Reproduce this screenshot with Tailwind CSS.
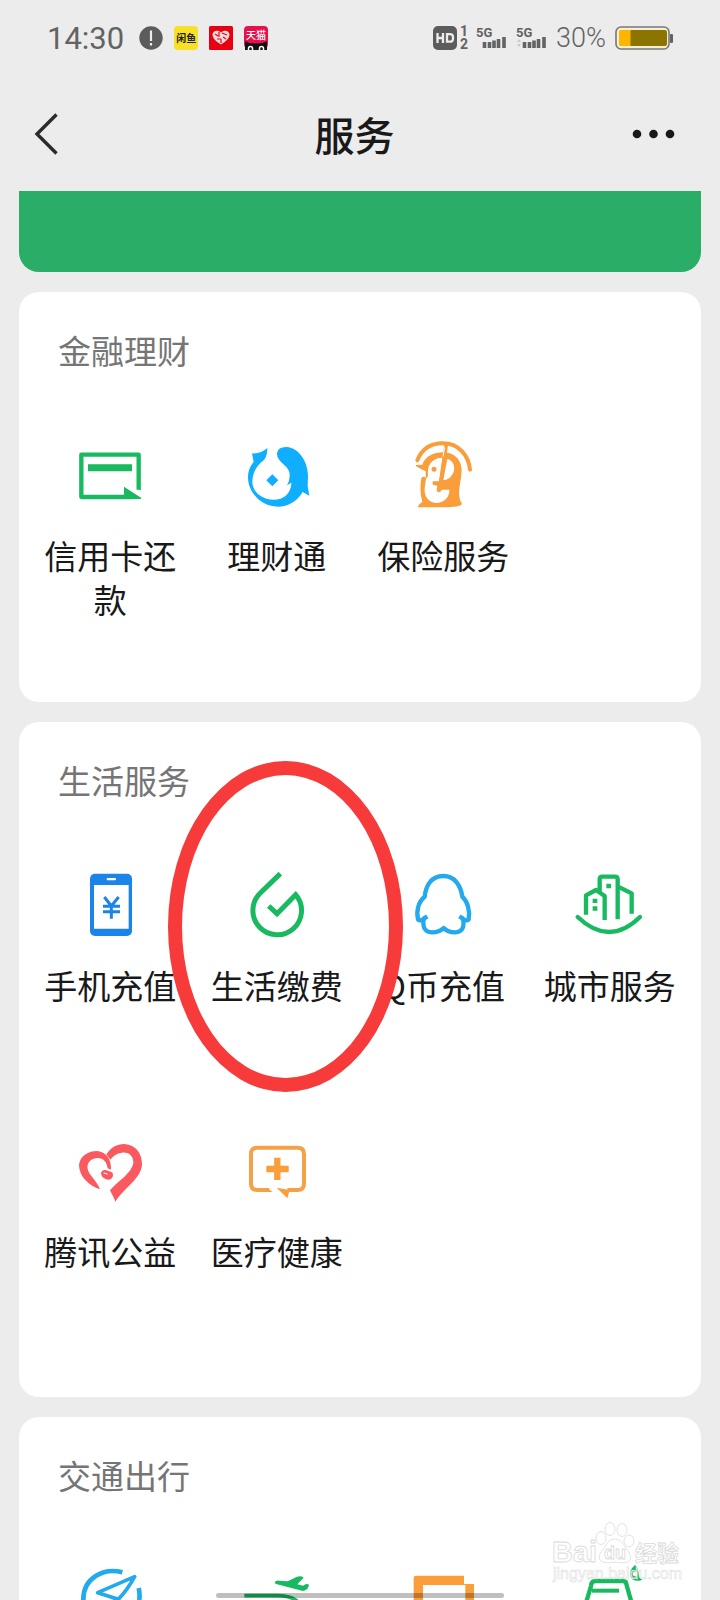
<!DOCTYPE html>
<html lang="zh-CN">
<head>
<meta charset="utf-8">
<meta name="viewport" content="width=device-width, initial-scale=1">
<title>服务</title>
<script src="https://cdn.jsdelivr.net/npm/@tailwindcss/browser@4"></script>
</head>
<body class="bg-[#ececec] text-[#191919] font-['Noto_Sans_CJK_SC',sans-serif]">
<div class="relative flex h-screen flex-col overflow-hidden">

  <!-- Status bar -->
  <div class="flex h-[76px] shrink-0 items-center justify-between pr-[46px] pl-[47px] font-[Roboto,sans-serif] text-[#636363]">
    <div class="flex items-center gap-[11px]">
      <span class="mr-1 text-[31px] leading-none">14:30</span>
      <svg class="size-6" viewBox="0 0 24 24"><circle cx="12" cy="12" r="11.7" fill="#5c5c5c"/><path d="M12 4.500v10.500M12 17v2.500" stroke="#ececec" stroke-width="2.200"/></svg>
      <div class="flex size-6 items-center justify-center rounded-sm bg-[#f8e026] font-['Noto_Sans_CJK_SC',sans-serif] text-[10px] leading-none font-bold text-[#222]">闲鱼</div>
      <svg class="size-6" viewBox="0 0 24 24"><rect width="24" height="24" rx="1.500" fill="#e60012"/><path d="M12 18.500C7 15.500 3.500 12 3.500 8.500C3.800 4.500 9 3.500 12 6.500C15 3.500 20.200 4.500 20.500 8.500C20.500 12 17 15.500 12 18.500Z" fill="#fbdcdc"/><path d="M6 8l3 2M10 6v5M13 7l5 2M8 13h4M14 11l3 2M12 13v4" stroke="#e60012" stroke-width="1.200"/></svg>
      <svg class="size-6" viewBox="0 0 24 24"><rect width="24" height="22" rx="4" fill="#e8104a"/><path d="M1 24V15Q4 17.500 12 17.500T23 15V24Z" fill="#111"/><text x="12" y="13" text-anchor="middle" font-family="Noto Sans CJK SC" font-size="10" font-weight="500" fill="#fff">天猫</text><path d="M4.500 24V22.500a2 2 0 0 1 4 0V24M15.500 24V22.500a2 2 0 0 1 4 0V24" fill="none" stroke="#fff" stroke-width="1.500"/></svg>
    </div>
    <div class="flex items-center">
      <svg class="h-6 w-6" viewBox="0 0 24 24"><rect width="24" height="24" rx="5" fill="#5c5c5c"/><path d="M4.500 7v10M10 7v10M4.500 12H10M14 8.200h3q3 0 3 3v1.500q0 3-3 3h-3z" fill="none" stroke="#ececec" stroke-width="2.300"/></svg>
      <div class="mr-2 flex w-[11px] flex-col items-end text-[14px] leading-[13px] font-bold"><span>1</span><span>2</span></div>
      <svg class="mr-2 h-6 w-8" viewBox="0 0 32 24"><text x="0" y="11" font-family="Roboto" font-size="13" font-weight="700" fill="#636363">5G</text><path d="M8.500 16v6M13.500 16v6M18 14.500V22M22.500 13v9M28 11v11" stroke="#636363" stroke-width="3.600"/></svg>
      <svg class="mr-2 h-6 w-8" viewBox="0 0 32 24"><text x="0" y="11" font-family="Roboto" font-size="13" font-weight="700" fill="#636363">5G</text><path d="M1 16l2-3 2 3zM1 18l2 3 2-3z" fill="#c9c9c9"/><path d="M8.500 16v6M13.500 16v6M18 14.500V22M22.500 13v9M28 11v11" stroke="#636363" stroke-width="3.600"/></svg>
      <span class="mr-[9px] text-[27px] leading-none font-light">30%</span>
      <svg class="h-6 w-[59px]" viewBox="0 0 59 24"><rect x="1" y="1" width="53" height="22" rx="5" fill="#f6efd8" stroke="#777" stroke-width="1.600"/><rect x="4" y="4" width="12" height="16" rx="1.500" fill="#ffb400"/><path d="M15.500 4H50a2 2 0 0 1 2 2V18a2 2 0 0 1-2 2H15.500Z" fill="#8c7400"/><rect x="55" y="8" width="3" height="9" rx="1" fill="#636363"/></svg>
    </div>
  </div>

  <!-- Title bar -->
  <header class="grid h-[115px] shrink-0 grid-cols-[1fr_auto_1fr] items-center pr-[45px] pl-[34px]">
    <button type="button" aria-label="返回" class="justify-self-start"><svg class="h-[42px] w-6" viewBox="0 0 24 42" fill="none" stroke="#2b2b2b" stroke-width="3.400"><path d="M22.500 1.500L3 21L22.500 40.500"/></svg></button>
    <h1 class="text-[40px] leading-[56px] font-medium">服务</h1>
    <button type="button" aria-label="更多" class="justify-self-end"><svg class="h-5 w-[43px]" viewBox="0 0 43 20" fill="#191919"><circle cx="5" cy="10" r="4.300"/><circle cx="21.500" cy="10" r="4.300"/><circle cx="38" cy="10" r="4.300"/></svg></button>
  </header>

  <main class="flex min-h-0 flex-1 flex-col gap-5 overflow-hidden px-[19px]">
    <div class="h-[81px] shrink-0 rounded-b-[20px] bg-[#2aae67]"></div>

    <section class="shrink-0 rounded-[20px] bg-white px-2 pt-9">
      <h2 class="mb-[63px] pl-[31px] text-[33px] leading-[44px] text-[#757575]">金融理财</h2>
      <div class="grid auto-rows-[267px] grid-cols-4 text-center text-[33px] leading-[44px]">
        <a href="#" class="flex flex-col items-center gap-[21px] px-4 pt-[5px]">
          <svg class="size-[72px]" viewBox="102 30 216 216"><path d="M296 179V74H124V201H275" fill="none" stroke="#19b95f" stroke-width="13" stroke-linejoin="round"/><path d="M290 168L302 182V176ZM144 103H276V124H144ZM252 170L303 203V207H252Z" fill="#19b95f"/></svg>
          <span>信用卡还款</span>
        </a>
        <a href="#" class="flex flex-col items-center gap-[21px] px-4 pt-[5px]">
          <svg class="size-[72px]" viewBox="603 30 216 216" fill="#10aeff"><path d="M636 70Q662 72 682 54Q682 78 672 90C640 112 632 150 640 172C652 203 690 216 722 206C742 198 754 180 754 158L741 166Q752 148 748 126C742 104 710 96 711 70Q714 50 740 51C778 54 804 96 804 138L803 168L808 197L788 186C772 214 744 230 714 230C664 230 624 188 624 142C624 118 634 104 641 96Z"/><path d="M697 133L715 151L697 169L679 151Z"/></svg>
          <span>理财通</span>
        </a>
        <a href="#" class="flex flex-col items-center gap-[21px] px-4 pt-[5px]">
          <svg class="size-[72px]" viewBox="141 60 216 216"><path d="M172 121C186 86 215 70 248 70C296 70 326 106 330 149" fill="none" stroke="#fa9d3b" stroke-width="12" stroke-linecap="round"/><path d="M167 135L187 134C196 108 222 97 250 97C286 98 305 122 305 152C303 192 288 222 306 252Q300 262 250 262H173Q176 251 187 246C180 222 180 198 184 174Q191 166 197 174V154L170 140Z" fill="#fa9d3b"/><path d="M204 152C205 127 224 113 248 113L238 184H218V194L232 197L230 213Q240 222 245 209H268C269 232 252 248 228 249C204 247 192 228 194 204L198 176L204 168ZM262 116C282 122 288 145 278 162Q268 180 250 181Z" fill="#fff"/><path d="M259 72L238 212" stroke="#fa9d3b" stroke-width="11"/><path d="M254 82L249 110" stroke="#fff" stroke-width="3"/><circle cx="222" cy="148" r="7.500" fill="#fa9d3b"/></svg>
          <span>保险服务</span>
        </a>
      </div>
    </section>

    <section class="relative shrink-0 rounded-[20px] bg-white px-2 pt-9">
      <h2 class="mb-[63px] pl-[31px] text-[33px] leading-[44px] text-[#757575]">生活服务</h2>
      <div class="grid auto-rows-[266px] grid-cols-4 text-center text-[33px] leading-[44px]">
        <a href="#" class="flex flex-col items-center gap-[21px] px-4 pt-[5px]">
          <svg class="size-[72px]" viewBox="102 60 216 216"><rect x="150" y="71" width="126" height="187" rx="15" fill="#1b84e8"/><path d="M162 105H266V236H162Z" fill="#fff"/><rect x="200" y="84" width="28" height="7" rx="3" fill="#fff"/><path d="M193 141L214 168L236 141M189 169H240M189 185H240M214 166V206" fill="none" stroke="#1b84e8" stroke-width="9"/></svg>
          <span>手机充值</span>
        </a>
        <a href="#" class="flex flex-col items-center gap-[21px] px-4 pt-[5px]">
          <svg class="size-[72px]" viewBox="603 60 216 216" fill="none" stroke="#19b95f" stroke-width="15"><path d="M721 71L661 129A73 73 0 1 0 767 134L711 191L686 168"/></svg>
          <span>生活缴费</span>
        </a>
        <a href="#" class="flex flex-col items-center gap-[21px] px-4 pt-[5px]">
          <svg class="size-[72px]" viewBox="81 60 216 216" fill="none" stroke="#22a9ee" stroke-width="13" stroke-linejoin="round"><path d="M190 78C154 78 138 106 134 140C116 154 108 182 114 208Q118 215 131 206C128 228 131 246 156 247Q178 247 191 234Q203 247 225 247C250 246 253 228 249 206Q262 215 266 208C271 182 262 154 247 140C242 106 224 78 190 78Z"/><path d="M131 206L142 199M249 206L238 199" stroke-width="13"/></svg>
          <span>Q币充值</span>
        </a>
        <a href="#" class="flex flex-col items-center gap-[21px] px-4 pt-[5px]">
          <svg class="size-[72px]" viewBox="582 60 216 216" fill="none" stroke="#19b95f" stroke-width="13" stroke-linejoin="round"><path d="M674 210V138L648 120L618 136V194M659 124V88Q659 80 667 80H705Q713 80 713 88V208M714 110L755 130V191"/><path d="M593 201Q640 246 687 246T780 201" stroke-linecap="round"/><path d="M679 101H693V115H679ZM638 146H652V159H638ZM638 169H652V182H638Z" fill="#19b95f" stroke="none"/></svg>
          <span>城市服务</span>
        </a>
        <a href="#" class="flex flex-col items-center gap-[21px] px-4 pt-[5px]">
          <svg class="size-[72px]" viewBox="102 48 216 216" fill="#fa5a5f"><path d="M180 208C148 197 118 172 117 136C120 106 146 93 172 93C200 96 215 120 213 149L203 145C200 124 189 113 171 114C150 116 140 131 143 147C148 168 168 178 180 208Z"/><path d="M199 103C213 82 230 72 253 72C288 74 307 102 306 134C303 176 254 201 226 245C222 233 216 224 210 211C232 184 274 162 280 130C281 104 262 96 246 98C230 100 218 108 211 119Z"/><path d="M183 158Q186 148 199 151L216 157Q222 165 216 174Q210 181 199 178Q183 172 183 158Z"/><path d="M192 159L202 162" stroke="#fff" stroke-width="3" stroke-linecap="round"/></svg>
          <span>腾讯公益</span>
        </a>
        <a href="#" class="flex flex-col items-center gap-[21px] px-4 pt-[5px]">
          <svg class="size-[72px]" viewBox="603 48 216 216"><path d="M688 210H652Q633 210 633 191V102Q633 83 652 83H773Q792 83 792 102V191Q792 210 773 210H742" fill="none" stroke="#f3a24a" stroke-width="12"/><path d="M679 203L698 216H679ZM710 203L749 210L742 235Z" fill="#fa9d3b"/><path d="M712 113V180M679 147H746" stroke="#fa9d3b" stroke-width="19"/></svg>
          <span>医疗健康</span>
        </a>
      </div>
      <!-- Hand-drawn highlight around 生活缴费 -->
      <div class="pointer-events-none absolute top-[39px] left-[149px] h-[331px] w-[235px] rounded-[50%] border-[14px] border-[#f73b3b]"></div>
    </section>

    <section class="shrink-0 rounded-t-[20px] bg-white px-2 pt-9">
      <h2 class="mb-[63px] pl-[31px] text-[33px] leading-[44px] text-[#757575]">交通出行</h2>
      <div class="grid grid-cols-4">
        <a href="#" aria-label="出行服务" class="flex justify-center pt-[5px]">
          <svg class="size-[72px]" viewBox="102 75 216 216" fill="none" stroke="#22a9ee" stroke-width="14"><path d="M247 97C190 82 130 115 130 178A85 85 0 0 0 298 178Q300 160 296 144"/><path d="M284 110L173 158L235 178Q262 150 284 110ZM225 174L215 230" stroke-width="11" stroke-linejoin="round"/></svg>
        </a>
        <a href="#" aria-label="火车票机票" class="flex justify-center pt-[5px]">
          <svg class="size-[72px]" viewBox="603 75 216 216"><path d="M704 127Q707 121 717 122L743 124L771 110Q784 106 791 113L772 133L789 137Q799 129 807 134Q805 150 789 153L711 133Q704 131 704 127Z" fill="#19b95f"/><path d="M613 167H715Q790 170 775 215V240H613" fill="none" stroke="#19b95f" stroke-width="11"/></svg>
        </a>
        <a href="#" aria-label="酒店" class="flex justify-center pt-[5px]">
          <svg class="size-[72px]" viewBox="81 195 216 216" fill="#fa9d3b"><path d="M101 400V234Q101 227 108 227H252V252H282V400H256V255H129V400Z"/></svg>
        </a>
        <a href="#" aria-label="加油服务" class="flex justify-center pt-[5px]">
          <svg class="size-[72px]" viewBox="582 195 216 216"><path d="M620 302L633 258Q634 243 646 243H729Q739 243 740 256L753 302V370H620Z" fill="none" stroke="#19b95f" stroke-width="13"/><path d="M636 272H717" stroke="#19b95f" stroke-width="12"/><path d="M765 195Q745 212 752 231Q763 249 787 239Q775 234 776 220Q773 202 765 195Z" fill="#19b95f"/><circle cx="765" cy="222" r="7" fill="#fff"/></svg>
        </a>
      </div>
    </section>
  </main>

  <!-- Watermark -->
  <svg class="pointer-events-none absolute right-[36px] bottom-[12px] h-[68px] w-[134px]" viewBox="550 1520 134 68" fill="#ffffff" fill-opacity=".7" stroke="#dadada" stroke-width=".8" font-family="Liberation Sans" font-weight="700">
    <text x="552" y="1562" font-size="29">Bai</text>
    <g><ellipse cx="601" cy="1538" rx="5" ry="6.500"/><ellipse cx="610" cy="1529" rx="5" ry="6.500"/><ellipse cx="622" cy="1530" rx="5" ry="6.500"/><ellipse cx="629" cy="1541" rx="5" ry="6"/><path d="M615 1539C624 1540 624 1548 629 1552C635 1565 622 1563 615 1562C605 1564 595 1562 601 1552C607 1546 607 1539 615 1539Z"/></g>
    <text x="604" y="1559" font-size="18">du</text>
    <text x="635" y="1561" font-size="22" font-family="Noto Sans CJK SC">经验</text>
    <text x="553" y="1579" font-size="16" stroke-width=".5" font-weight="400">jingyan.baidu.com</text>
  </svg>

  <!-- Gesture bar -->
  <div class="absolute bottom-[2px] left-1/2 h-[5px] w-2/5 -translate-x-1/2 rounded-full bg-black/25"></div>
</div>
</body>
</html>
